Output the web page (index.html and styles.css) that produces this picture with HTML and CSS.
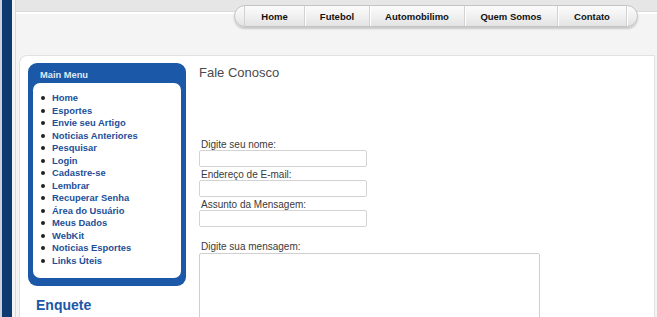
FILE: index.html
```html
<!DOCTYPE html>
<html lang="pt">
<head>
<meta charset="utf-8">
<title>Fale Conosco</title>
<link rel="stylesheet" href="styles.css">
</head>
<body>
<div class="page">
  <div class="rail"></div>
  <div class="gutter"></div>
  <div class="main">
    <header class="top">
      <nav class="nav">
        <span class="cap"></span>
        <a class="item w-home" href="#">Home</a>
        <a class="item w-fut" href="#">Futebol</a>
        <a class="item w-auto" href="#">Automobilimo</a>
        <a class="item w-quem" href="#">Quem Somos</a>
        <a class="item w-cont" href="#">Contato</a>
        <span class="cap cap-r"></span>
      </nav>
    </header>
    <div class="panel">
      <aside class="sidebar">
        <div class="menubox">
          <div class="menuhead">Main Menu</div>
          <ul class="menulist">
            <li><a href="#">Home</a></li>
            <li><a href="#">Esportes</a></li>
            <li><a href="#">Envie seu Artigo</a></li>
            <li><a href="#">Noticias Anteriores</a></li>
            <li><a href="#">Pesquisar</a></li>
            <li><a href="#">Login</a></li>
            <li><a href="#">Cadastre-se</a></li>
            <li><a href="#">Lembrar</a></li>
            <li><a href="#">Recuperar Senha</a></li>
            <li><a href="#">Área do Usuário</a></li>
            <li><a href="#">Meus Dados</a></li>
            <li><a href="#">WebKit</a></li>
            <li><a href="#">Noticias Esportes</a></li>
            <li><a href="#">Links Úteis</a></li>
          </ul>
        </div>
        <h2 class="enquete">Enquete</h2>
      </aside>
      <section class="content">
        <h1 class="title">Fale Conosco</h1>
        <form class="form">
          <label class="lbl first">Digite seu nome:</label>
          <input class="field" type="text">
          <label class="lbl">Endereço de E-mail:</label>
          <input class="field" type="text">
          <label class="lbl">Assunto da Mensagem:</label>
          <input class="field" type="text">
          <label class="lbl msg">Digite sua mensagem:</label>
          <textarea class="area"></textarea>
        </form>
      </section>
    </div>
  </div>
</div>
</body>
</html>
```
FILE: styles.css
```css
* { box-sizing: border-box; }
html, body { margin: 0; padding: 0; }
body {
  font-family: "Liberation Sans", Arial, sans-serif;
  background: #f4f4f4;
  height: 317px;
  overflow: hidden;
}
.page {
  display: flex;
  height: 317px;
  overflow: hidden;
}
.rail {
  width: 12px;
  background: #0d3a6f;
  border-left: 2px solid #c9d2de;
  flex: none;
}
.gutter {
  width: 4px;
  flex: none;
  background: #f4f4f4;
  border-right: 1px solid #dadada;
}
.main {
  flex: 1;
  display: flex;
  flex-direction: column;
  min-width: 0;
  overflow: hidden;
}
.top {
  height: 55px;
  flex: none;
  background: linear-gradient(to bottom, #e6e6e6 0, #e6e6e6 11px, #d9d9d9 11px, #d9d9d9 12px, #ffffff 12px, #ffffff 14px, #f4f4f4 14px);
  display: flex;
  justify-content: flex-end;
  align-items: flex-start;
  padding-top: 5px;
  padding-right: 19px;
}
.nav {
  display: flex;
  height: 22px;
  border: 1px solid #c4c4c4;
  border-radius: 11px;
  background: linear-gradient(to bottom, #fbfbfb 0%, #f2f2f2 45%, #e3e3e3 100%);
  box-shadow: 0 2px 2px rgba(0,0,0,0.18);
}
.cap {
  width: 10px;
  border-right: 1px solid #d2d2d2;
}
.cap-r {
  width: 10px;
  border-right: none;
}
.item {
  display: flex;
  align-items: center;
  justify-content: center;
  font-size: 9.5px;
  font-weight: bold;
  color: #111;
  text-decoration: none;
  border-right: 1px solid #d2d2d2;
  box-shadow: 1px 0 0 #fff;
}
.w-home { width: 60px; }
.w-fut { width: 65px; }
.w-auto { width: 95px; }
.w-quem { width: 93px; }
.w-cont { width: 69px; }

.panel {
  flex: 1;
  margin-left: 3px;
  margin-right: 2px;
  background: #ffffff;
  border: 1px solid #e1e1e1;
  border-bottom: none;
  border-radius: 8px 0 0 0;
  display: flex;
  gap: 13px;
  padding-left: 8px;
  padding-top: 7px;
  min-height: 0;
  overflow: hidden;
}
.sidebar {
  width: 158px;
  flex: none;
}
.menubox {
  background: #1b58a7;
  border-radius: 9px;
  padding: 0 5px 8px 5px;
  height: 223px;
  display: flex;
  flex-direction: column;
}
.menuhead {
  height: 20px;
  padding-top: 4px;
  padding-left: 7px;
  line-height: 16px;
  font-size: 9.3px;
  font-weight: bold;
  color: #dfe8f4;
}
.menulist {
  flex: 1;
  list-style: none;
  margin: 0;
  background: #ffffff;
  border-radius: 7px;
  padding: 9px 0 0 0;
}
.menulist li {
  display: flex;
  align-items: center;
  height: 12.5px;
  font-size: 9.4px;
  font-weight: bold;
}
.menulist li::before {
  content: "";
  width: 4px;
  height: 4px;
  border-radius: 50%;
  background: #222;
  margin-left: 8px;
  margin-right: 7px;
  flex: none;
}
.menulist a {
  color: #1d4f99;
  text-decoration: none;
  line-height: 12.5px;
}
.enquete {
  margin: 11px 0 0 8px;
  font-size: 14px;
  line-height: 16px;
  font-weight: bold;
  color: #1b58a7;
}
.content {
  flex: 1;
  padding-top: 2px;
  min-height: 0;
}
.title {
  margin: 0;
  font-size: 13px;
  line-height: 15px;
  font-weight: normal;
  color: #4a4a4a;
}
.form {
  display: flex;
  flex-direction: column;
  align-items: flex-start;
}
.lbl {
  display: block;
  font-size: 10px;
  line-height: 10px;
  height: 10px;
  color: #3a3a3a;
  margin-top: 3px;
  padding-left: 2px;
}
.lbl.first { margin-top: 59.5px; }
.lbl.msg { margin-top: 15px; }
.field {
  width: 168px;
  height: 17px;
  border: 1px solid #d3d3d3;
  border-radius: 2px;
  background: #fff;
  margin: 0;
  padding: 0;
}
.area {
  width: 341px;
  height: 72px;
  margin: 1.5px 0 0 0;
  border: 1px solid #cfcfcf;
  border-radius: 2px;
  resize: none;
  background: #fff;
}
```
